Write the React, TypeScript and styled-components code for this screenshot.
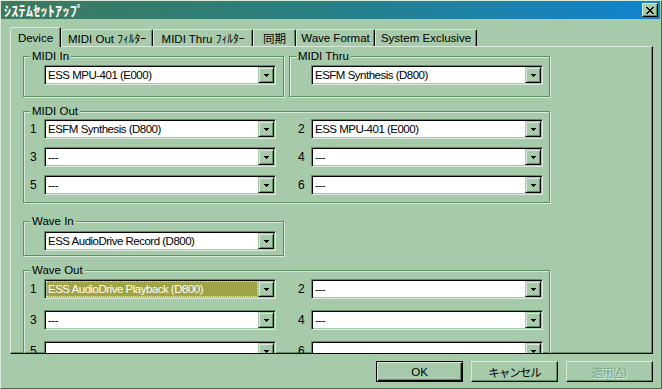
import React from "react";
import styled, { createGlobalStyle, css } from "styled-components";

const FACE = "#a6caaa";
const LIGHT = "#d8eada";
const SHADOW = "#5d9163";
const DARK = "#000";
const FONT = `"Liberation Sans", "Noto Sans CJK JP", sans-serif`;

const GlobalStyle = createGlobalStyle`
  html, body {
    margin: 0;
    background: ${FACE};
  }
  * {
    box-sizing: border-box;
  }
`;

const Window = styled.div`
  width: 662px;
  height: 389px;
  display: flex;
  flex-direction: column;
  background: ${FACE};
  border: 1px solid;
  border-color: ${LIGHT} #3f6f46 #3f6f46 ${LIGHT};
  padding: 0 1px 1px 0;
  font-family: ${FONT};
  font-size: 11px;
  color: #000;
  overflow: hidden;
`;

const TitleBar = styled.div`
  height: 18px;
  display: flex;
  align-items: center;
  justify-content: space-between;
  padding: 0 2px 0 3px;
  background: linear-gradient(90deg, #3f7a5c 0%, #2a8080 45%, #1084d0 100%);
`;

const Title = styled.span`
  color: #fff;
  font-weight: bold;
  font-size: 14px;
  font-family: "Noto Sans CJK JP", sans-serif;
  letter-spacing: 0.3px;
`;

const CloseButton = styled.div`
  width: 16px;
  height: 14px;
  display: flex;
  align-items: center;
  justify-content: center;
  background: ${FACE};
  border: 1px solid;
  border-color: ${LIGHT} ${DARK} ${DARK} ${LIGHT};
  box-shadow: inset -1px -1px ${SHADOW};
`;

const Body = styled.div`
  flex: 1;
  display: flex;
  flex-direction: column;
  padding: 7px 0 0 9px;
`;

const TabStrip = styled.div`
  display: flex;
  align-items: flex-end;
  height: 20px;
  position: relative;
  z-index: 1;
`;

const Tab = styled.div<{ $active?: boolean; $w: number }>`
  width: ${(p) => p.$w}px;
  height: ${(p) => (p.$active ? 20 : 17)}px;
  display: flex;
  align-items: center;
  justify-content: center;
  white-space: nowrap;
  font-size: 11.5px;
  background: ${FACE};
  border-top: 1px solid ${LIGHT};
  border-left: 1px solid ${LIGHT};
  border-right: 1px solid ${DARK};
  border-radius: 2px 2px 0 0;
  box-shadow: inset -1px 0 ${SHADOW};
  ${(p) =>
    p.$active &&
    css`
      margin-bottom: -1px;
      padding-top: 1px;
    `}
`;

const Panel = styled.div`
  width: 643px;
  height: 308px;
  overflow: hidden;
  border: 1px solid;
  border-color: ${LIGHT} ${DARK} ${DARK} ${LIGHT};
  box-shadow: inset -1px -1px ${SHADOW};
  padding: 3px 0 0 12px;
`;

const GroupRow = styled.div`
  display: flex;
  gap: 5px;
`;

const Group = styled.fieldset<{ $w: number; $mt?: number }>`
  width: ${(p) => p.$w}px;
  margin: ${(p) => p.$mt ?? 0}px 0 0 0;
  padding: 0;
  border: 1px solid ${SHADOW};
  box-shadow: inset 1px 1px ${LIGHT}, 1px 1px 0 ${LIGHT};
  min-inline-size: 0;
`;

const Legend = styled.legend`
  margin-left: 6px;
  padding: 0 2px;
  line-height: 13px;
  font-size: 11.5px;
  background: ${FACE};
`;

const GroupInner = styled.div<{ $pt: number; $pb: number; $pl: number; $gap?: number }>`
  display: flex;
  flex-direction: column;
  gap: ${(p) => p.$gap ?? 0}px;
  padding: ${(p) => p.$pt}px 0 ${(p) => p.$pb}px ${(p) => p.$pl}px;
`;

const ComboRow = styled.div`
  display: flex;
  align-items: center;
`;

const RowLabel = styled.span<{ $w: number; $ml?: number }>`
  width: ${(p) => p.$w}px;
  margin-left: ${(p) => p.$ml ?? 0}px;
  font-size: 12px;
`;

const Combo = styled.div`
  width: 232px;
  height: 20px;
  display: flex;
  background: #fff;
  border: 1px solid;
  border-color: ${SHADOW} ${LIGHT} ${LIGHT} ${SHADOW};
  box-shadow: inset 1px 1px ${DARK}, inset -1px -1px ${FACE};
  padding: 1px;
`;

const ComboText = styled.div<{ $selected?: boolean }>`
  flex: 1;
  display: flex;
  align-items: center;
  padding-left: 2px;
  font-size: 11.5px;
  letter-spacing: -0.5px;
  white-space: nowrap;
  overflow: hidden;
  ${(p) =>
    p.$selected &&
    css`
      background: #a0a448;
      color: #fff;
      outline: 1px dotted #e8e8c8;
      outline-offset: -1px;
    `}
`;

const DropButton = styled.div`
  width: 16px;
  height: 16px;
  display: flex;
  align-items: center;
  justify-content: center;
  background: ${FACE};
  border: 1px solid;
  border-color: ${FACE} ${DARK} ${DARK} ${FACE};
  box-shadow: inset 1px 1px ${LIGHT}, inset -1px -1px ${SHADOW};
`;

const ButtonRow = styled.div`
  display: flex;
  justify-content: flex-end;
  gap: 8px;
  margin-top: 7px;
  padding-right: 7px;
`;

const Button = styled.div<{ $default?: boolean; $disabled?: boolean }>`
  width: 87px;
  height: 21px;
  display: flex;
  align-items: center;
  justify-content: center;
  background: ${FACE};
  border: 1px solid;
  border-color: ${LIGHT} ${DARK} ${DARK} ${LIGHT};
  box-shadow: inset -1px -1px ${SHADOW};
  font-size: 11.5px;
  ${(p) =>
    p.$default &&
    css`
      border-color: ${DARK};
      box-shadow: inset 1px 1px ${LIGHT}, inset -1px -1px ${DARK}, inset -2px -2px ${SHADOW};
    `}
  ${(p) =>
    p.$disabled &&
    css`
      color: #7fa684;
      text-shadow: 1px 1px ${LIGHT};
    `}
`;

const Kana = styled.span`
  font-family: "Noto Sans CJK JP", sans-serif;
  letter-spacing: -1px;
`;

const Arrow = () => (
  <svg width="5" height="3" viewBox="0 0 5 3" shapeRendering="crispEdges">
    <path d="M0 0h5v1h-1v1h-1v1h-1v-1h-1v-1h-1z" fill="#000" />
  </svg>
);

const CloseGlyph = () => (
  <svg width="8" height="7" viewBox="0 0 8 7" shapeRendering="crispEdges">
    <path
      d="M0 0h2v1h1v1h2v-1h1v-1h2v1h-1v1h-1v1h-1v1h1v1h1v1h1v1h-2v-1h-1v-1h-2v1h-1v1h-2v-1h1v-1h1v-1h1v-1h-1v-1h-1v-1h-1z"
      fill="#000"
    />
  </svg>
);

const ComboBox: React.FC<{ value: string; selected?: boolean }> = ({ value, selected }) => (
  <Combo>
    <ComboText $selected={selected}>{value}</ComboText>
    <DropButton>
      <Arrow />
    </DropButton>
  </Combo>
);

type Pair = [string, string];

const PairRows: React.FC<{ rows: Pair[]; selectedFirst?: boolean }> = ({ rows, selectedFirst }) => (
  <>
    {rows.map((r, i) => (
      <ComboRow key={i}>
        <RowLabel $w={14}>{i * 2 + 1}</RowLabel>
        <ComboBox value={r[0]} selected={selectedFirst && i === 0} />
        <RowLabel $w={13} $ml={22}>
          {i * 2 + 2}
        </RowLabel>
        <ComboBox value={r[1]} />
      </ComboRow>
    ))}
  </>
);

const tabs = [
  { label: "Device", w: 51 },
  { label: "MIDI Out ﾌｨﾙﾀｰ", w: 92 },
  { label: "MIDI Thru ﾌｨﾙﾀｰ", w: 100 },
  { label: "同期", w: 43 },
  { label: "Wave Format", w: 79 },
  { label: "System Exclusive", w: 102 },
];

const midiOut: Pair[] = [
  ["ESFM Synthesis (D800)", "ESS MPU-401 (E000)"],
  ["---", "---"],
  ["---", "---"],
];

const waveOut: Pair[] = [
  ["ESS AudioDrive Playback (D800)", "---"],
  ["---", "---"],
  ["", ""],
];

const App: React.FC = () => {
  return (
    <>
      <GlobalStyle />
      <Window>
        <TitleBar>
          <Title>ｼｽﾃﾑｾｯﾄｱｯﾌﾟ</Title>
          <CloseButton>
            <CloseGlyph />
          </CloseButton>
        </TitleBar>
        <Body>
          <TabStrip>
            {tabs.map((t, i) => (
              <Tab key={t.label} $w={t.w} $active={i === 0}>
                {t.label}
              </Tab>
            ))}
          </TabStrip>
          <Panel>
            <GroupRow>
              <Group $w={261}>
                <Legend>MIDI In</Legend>
                <GroupInner $pt={2} $pb={11} $pl={20}>
                  <ComboBox value="ESS MPU-401 (E000)" />
                </GroupInner>
              </Group>
              <Group $w={261}>
                <Legend>MIDI Thru</Legend>
                <GroupInner $pt={2} $pb={11} $pl={21}>
                  <ComboBox value="ESFM Synthesis (D800)" />
                </GroupInner>
              </Group>
            </GroupRow>
            <Group $w={527} $mt={8}>
              <Legend>MIDI Out</Legend>
              <GroupInner $pt={1} $pb={7} $pl={6} $gap={8}>
                <PairRows rows={midiOut} />
              </GroupInner>
            </Group>
            <Group $w={527 - 266} $mt={12}>
              <Legend>Wave In</Legend>
              <GroupInner $pt={3} $pb={4} $pl={20}>
                <ComboBox value="ESS AudioDrive Record (D800)" />
              </GroupInner>
            </Group>
            <Group $w={527} $mt={8}>
              <Legend>Wave Out</Legend>
              <GroupInner $pt={2} $pb={8} $pl={6} $gap={11}>
                <PairRows rows={waveOut} selectedFirst />
              </GroupInner>
            </Group>
          </Panel>
          <ButtonRow>
            <Button $default>OK</Button>
            <Button>
              <Kana>キャンセル</Kana>
            </Button>
            <Button $disabled>
              <Kana>適用(</Kana>
              <u>A</u>)
            </Button>
          </ButtonRow>
        </Body>
      </Window>
    </>
  );
};

export default App;
